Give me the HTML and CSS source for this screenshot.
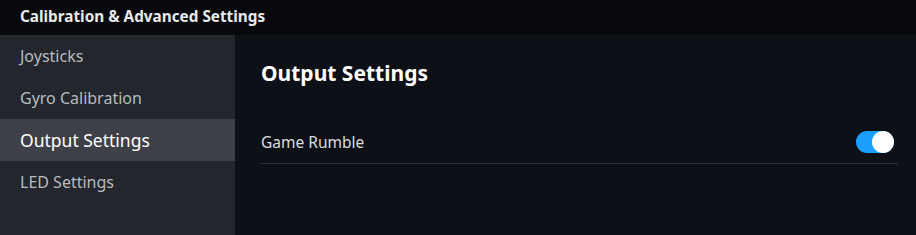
FILE: index.html
```html
<!DOCTYPE html>
<html lang="en">
<head>
    <meta charset="UTF-8">
    <title>Calibration &amp; Advanced Settings</title>
    <link rel="stylesheet" href="styles.css">
</head>
<body>
    <div class="window">
        <div class="title-bar">Calibration &amp; Advanced Settings</div>
        <div class="content">
            <div class="sidebar">
                <div class="nav-item">Joysticks</div>
                <div class="nav-item">Gyro Calibration</div>
                <div class="nav-item active">Output Settings</div>
                <div class="nav-item">LED Settings</div>
            </div>
            <div class="panel">
                <h2>Output Settings</h2>
                <div class="setting-row">
                    <span class="setting-label">Game Rumble</span>
                    <div class="toggle on"><div class="knob"></div></div>
                </div>
            </div>
        </div>
    </div>
</body>
</html>
```

FILE: styles.css
```css
body {
    margin: 0;
    padding: 0;
    font-family: 'Noto Sans', 'Open Sans', sans-serif;
    background: #0e1117;
    color: #dcdedf;
}

.window {
    width: 916px;
    height: 235px;
    display: flex;
    flex-direction: column;
    overflow: hidden;
}

.title-bar {
    height: 35px;
    line-height: 32px;
    padding-left: 20px;
    background: #08090c;
    color: #e8e9ea;
    font-size: 15.3px;
    font-weight: bold;
    box-sizing: border-box;
}

.content {
    flex: 1;
    display: flex;
}

.sidebar {
    width: 235px;
    background: #23262c;
}

.nav-item {
    height: 42px;
    line-height: 42px;
    padding-left: 20px;
    font-size: 16px;
    color: #b8bcbf;
}

.nav-item.active {
    background: #3d4046;
    color: #ffffff;
    font-size: 17.5px;
}

.panel {
    flex: 1;
    background: #0d1016;
    padding: 0 18px 0 26px;
}

.panel h2 {
    margin: 24px 0 0;
    height: 28px;
    line-height: 28px;
    font-size: 21px;
    font-weight: bold;
    color: #ffffff;
}

.setting-row {
    margin-top: 34px;
    height: 42px;
    display: flex;
    align-items: center;
    justify-content: space-between;
    border-bottom: 1px solid #2a2d33;
}

.setting-label {
    font-size: 15.5px;
    color: #dcdedf;
}

.toggle {
    width: 38px;
    height: 22px;
    border-radius: 11px;
    background: #3d4046;
    position: relative;
    margin-right: 4px;
}

.toggle.on {
    background: #1a9fff;
}

.knob {
    position: absolute;
    top: 1px;
    left: 1px;
    width: 20px;
    height: 20px;
    border-radius: 50%;
    background: #ffffff;
}

.toggle.on .knob {
    left: auto;
    right: 0;
    top: 0;
    width: 22px;
    height: 22px;
}
```
